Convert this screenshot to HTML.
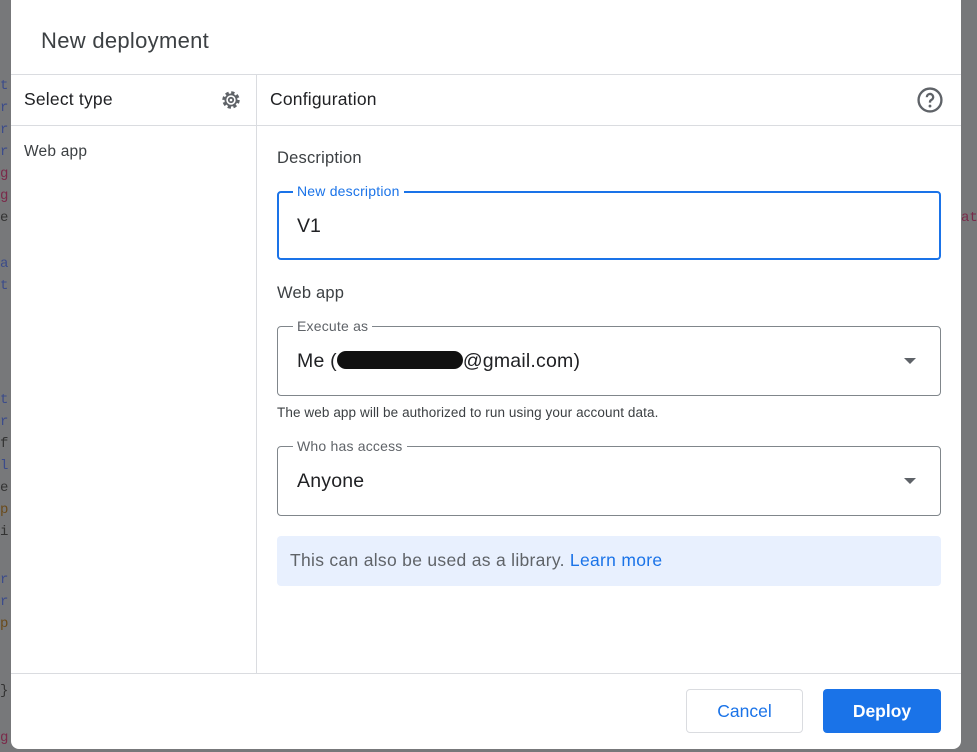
<!DOCTYPE html>
<html><head><style>
*{box-sizing:border-box;margin:0;padding:0}
body{width:977px;height:752px;background:#77787a;font-family:"Liberation Sans",Arial,sans-serif;position:relative;overflow:hidden}
.code{position:absolute;left:0;font-family:"Liberation Mono",monospace;font-size:14px}
.dlg{position:absolute;left:11px;top:-8px;width:950px;height:757px;background:#fff;border-radius:8px;overflow:hidden}
.abs{position:absolute;white-space:nowrap}
.hl{position:absolute;height:1px;background:#dadce0}
.fs{position:absolute;border:1px solid #80868b;border-radius:4px}
.lbl{position:absolute;background:#fff;padding:0 4px;font-size:14px;color:#5f6368;line-height:14px;letter-spacing:.2px}
</style></head><body>
<div class="code" style="top:78px;color:#3b4b8a">t</div>
<div class="code" style="top:100px;color:#3b4b8a">r</div>
<div class="code" style="top:122px;color:#3b4b8a">r</div>
<div class="code" style="top:144px;color:#3b4b8a">r</div>
<div class="code" style="top:166px;color:#7a2a4a">g</div>
<div class="code" style="top:188px;color:#7a2a4a">g</div>
<div class="code" style="top:210px;color:#333">e</div>
<div class="code" style="top:256px;color:#3b4b8a">a</div>
<div class="code" style="top:278px;color:#3b4b8a">t</div>
<div class="code" style="top:392px;color:#3b4b8a">t</div>
<div class="code" style="top:414px;color:#3b4b8a">r</div>
<div class="code" style="top:436px;color:#333">f</div>
<div class="code" style="top:458px;color:#3b4b8a">l</div>
<div class="code" style="top:480px;color:#333">e</div>
<div class="code" style="top:502px;color:#6a4a1a">p</div>
<div class="code" style="top:524px;color:#333">i</div>
<div class="code" style="top:572px;color:#3b4b8a">r</div>
<div class="code" style="top:594px;color:#3b4b8a">r</div>
<div class="code" style="top:616px;color:#6a4a1a">p</div>
<div class="code" style="top:683px;color:#333">}</div>
<div class="code" style="top:730px;color:#7a2a4a">g</div>
<div class="code" style="top:210px;left:961px;color:#7a2a4a">ate</div>
<div class="dlg">
 <div class="abs" style="left:30px;top:36px;font-size:22px;color:#3c4043;letter-spacing:.3px">New deployment</div>
 <div class="hl" style="left:0;top:82px;width:950px"></div>
 <div class="hl" style="left:0;top:133px;width:950px"></div>
 <div class="hl" style="left:0;top:681px;width:950px"></div>
 <div class="abs" style="left:245px;top:82px;width:1px;height:599px;background:#dadce0"></div>
 <div class="abs" style="left:13px;top:97px;font-size:17.5px;color:#202124;letter-spacing:.2px">Select type</div>
 <svg class="abs" style="left:210px;top:98px" width="20" height="20" viewBox="0 0 20 20"><circle cx="10" cy="10" r="7.2" fill="none" stroke="#5f6368" stroke-width="3" stroke-dasharray="3.2 2.45"/><circle cx="10" cy="10" r="5.6" fill="none" stroke="#5f6368" stroke-width="1.8"/><circle cx="10" cy="10" r="2.2" fill="none" stroke="#5f6368" stroke-width="1.8"/></svg>
 <div class="abs" style="left:13px;top:151px;font-size:15.5px;color:#3c4043;letter-spacing:.2px">Web app</div>
 <div class="abs" style="left:259px;top:97px;font-size:17.5px;color:#202124;letter-spacing:.2px">Configuration</div>
 <svg class="abs" style="left:905px;top:94px" width="28" height="28" viewBox="0 0 24 24"><circle cx="12" cy="12" r="9.8" fill="none" stroke="#5f6368" stroke-width="2"/><path d="M9.3 9.6a2.7 2.7 0 1 1 3.8 2.4c-.8.4-1.1.9-1.1 1.8v.4" fill="none" stroke="#5f6368" stroke-width="2"/><circle cx="12" cy="17.2" r="1.2" fill="#5f6368"/></svg>
 <div class="abs" style="left:266px;top:157px;font-size:16.5px;color:#3c4043;letter-spacing:.2px">Description</div>
 <div class="fs" style="left:266px;top:199px;width:664px;height:69px;border:2px solid #1a73e8"></div>
 <div class="lbl" style="left:282px;top:192px;color:#1a73e8">New description</div>
 <div class="abs" style="left:286px;top:223px;font-size:19.5px;color:#202124">V1</div>
 <div class="abs" style="left:266px;top:292px;font-size:16.5px;color:#3c4043;letter-spacing:.2px">Web app</div>
 <div class="fs" style="left:266px;top:334px;width:664px;height:70px"></div>
 <div class="lbl" style="left:282px;top:327px">Execute as</div>
 <div class="abs" style="left:286px;top:358px;font-size:19.5px;color:#202124;letter-spacing:.2px">Me (<span style="display:inline-block;width:126px;height:18px;background:#111;border-radius:9px;vertical-align:-2px"></span>@gmail.com)</div>
 <div class="abs" style="left:893px;top:366px;width:0;height:0;border-left:6px solid transparent;border-right:6px solid transparent;border-top:6px solid #5f6368"></div>
 <div class="abs" style="left:266px;top:413px;font-size:13.5px;color:#3c4043;letter-spacing:.1px">The web app will be authorized to run using your account data.</div>
 <div class="fs" style="left:266px;top:454px;width:664px;height:70px"></div>
 <div class="lbl" style="left:282px;top:447px">Who has access</div>
 <div class="abs" style="left:286px;top:478px;font-size:19.5px;color:#202124;letter-spacing:.2px">Anyone</div>
 <div class="abs" style="left:893px;top:486px;width:0;height:0;border-left:6px solid transparent;border-right:6px solid transparent;border-top:6px solid #5f6368"></div>
 <div class="abs" style="left:266px;top:544px;width:664px;height:50px;background:#e8f0fe;border-radius:4px"></div>
 <div class="abs" style="left:279px;top:558px;font-size:17.5px;color:#5f6368;letter-spacing:.3px">This can also be used as a library. <span style="color:#1a73e8">Learn more</span></div>
 <div class="abs" style="left:675px;top:697px;width:117px;height:44px;border:1px solid #dadce0;border-radius:4px;color:#1a73e8;font-size:17.5px;text-align:center;line-height:42px">Cancel</div>
 <div class="abs" style="left:812px;top:697px;width:118px;height:44px;background:#1a73e8;border-radius:4px;color:#fff;font-size:17.5px;font-weight:bold;text-align:center;line-height:44px">Deploy</div>
</div>
</body></html>
